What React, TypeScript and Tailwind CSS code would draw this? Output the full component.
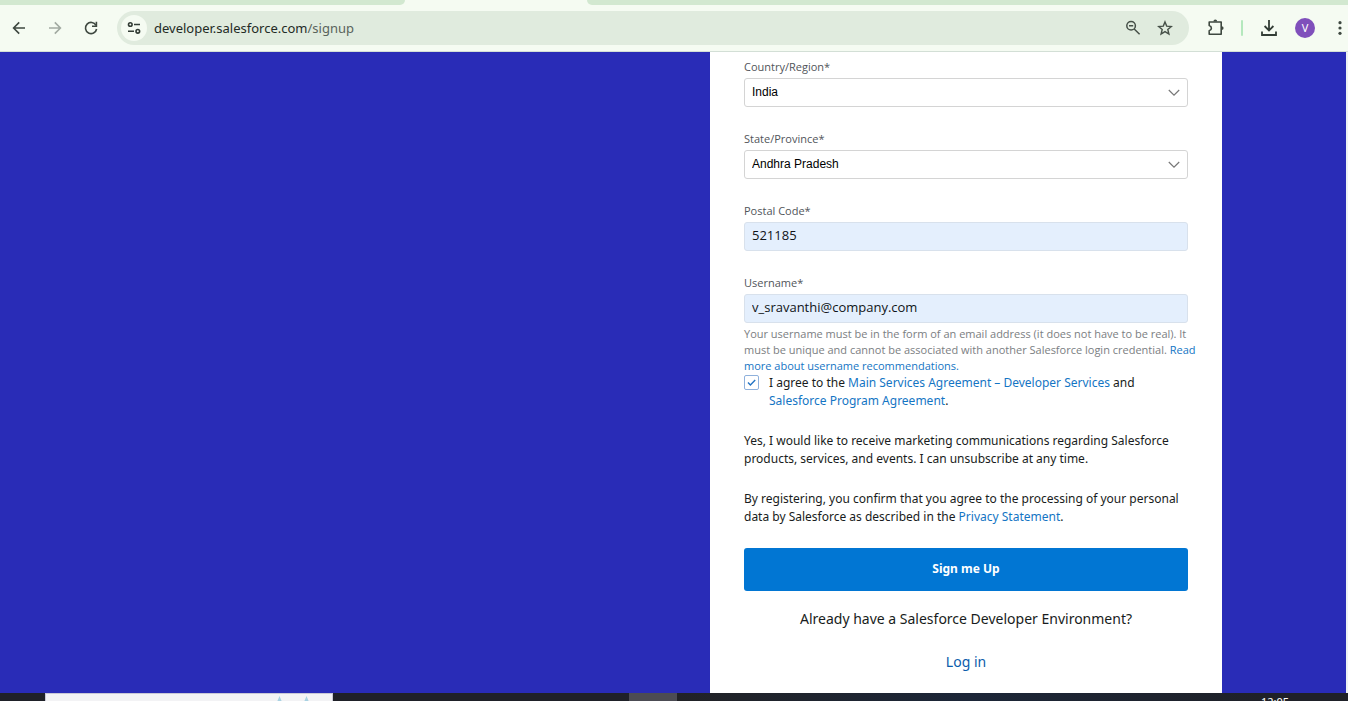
import React, { useState } from "react";

const STATES = ["Andhra Pradesh", "Karnataka", "Kerala", "Tamil Nadu", "Telangana"];
const COUNTRIES = ["India", "Japan", "United Kingdom", "United States"];

const link = "text-[#1475c4] hover:underline";

function Toolbar() {
  return (
    <header className="shrink-0 border-b border-[#d3dfd6] bg-[#f5fbf2]">
      <div className="flex h-[5px]">
        <div className="w-[405px] rounded-br-lg bg-[#d2e8d0]" />
        <div className="w-[182px]" />
        <div className="flex-1 rounded-bl-lg bg-[#d2e8d0]" />
      </div>
      <div className="flex h-[46px] items-center">
        <button aria-label="Back" className="ml-[11px] size-4">
          <svg viewBox="0 0 16 16" fill="none" stroke="#3e4840" strokeWidth="1.6">
            <path d="M14 8H2.8M8.2 2.4 2.6 8l5.6 5.6" />
          </svg>
        </button>
        <button aria-label="Forward" className="ml-5 size-4">
          <svg viewBox="0 0 16 16" fill="none" stroke="#a2aaa2" strokeWidth="1.6">
            <path d="M2 8h11.2M7.8 2.4 13.4 8l-5.6 5.6" />
          </svg>
        </button>
        <button aria-label="Reload" className="ml-5 size-4">
          <svg viewBox="0 0 16 16" fill="none" stroke="#3e4840" strokeWidth="1.6">
            <path d="M13 5.3A5.6 5.6 0 1 0 13.6 9" />
            <path d="M13.4 1.8v4.4H9" />
          </svg>
        </button>
        <div className="ml-[18px] flex h-[34px] flex-1 items-center rounded-full bg-[#e0ebde] pr-4">
          <button
            aria-label="View site information"
            className="ml-1 flex size-[26px] items-center justify-center rounded-full bg-[#f5fbf2]"
          >
            <svg className="size-4" viewBox="0 0 16 16" fill="none" stroke="#333d36" strokeWidth="1.6">
              <circle cx="4.3" cy="4.5" r="1.8" />
              <path d="M8 4.5h6M2 11.3h6" />
              <circle cx="11.8" cy="11.3" r="1.8" />
            </svg>
          </button>
          <div className="ml-[7px] flex-1 font-['Noto_Sans',sans-serif] text-[13px] leading-5 text-[#232a25]">
            developer.salesforce.com<span className="text-[#59635b]">/signup</span>
          </div>
          <button aria-label="Zoom" className="size-4">
            <svg viewBox="0 0 16 16" fill="none" stroke="#465048" strokeWidth="1.5">
              <circle cx="6.1" cy="5.8" r="4.3" />
              <path d="M4 5.8h4.2M9.2 9l5.4 5.2" />
            </svg>
          </button>
          <button aria-label="Bookmark this tab" className="ml-4 size-4">
            <svg viewBox="0 0 16 16" fill="none" stroke="#465048" strokeWidth="1.4">
              <path d="m8 1.9 1.7 4.2 4.6.4-3.5 3 1.1 4.5L8 11.6 4.1 14l1.1-4.5-3.5-3 4.6-.4z" />
            </svg>
          </button>
        </div>
        <button aria-label="Extensions" className="ml-[18px] size-[18px]">
          <svg viewBox="0 0 18 18" fill="none" stroke="#3e4840" strokeWidth="1.6">
            <path d="M2.2 3h12v12.300h-12v-3.600c1.500-.4 2.200-1.300 2.200-2.500s-.7-2.200-2.200-2.600z" strokeLinejoin="round" />
            <path d="M6.400 2.500a1.900 1.900 0 0 1 3.800 0zM14.700 7.200a1.900 1.900 0 0 1 0 3.800z" fill="#3e4840" stroke="none" />
          </svg>
        </button>
        <div className="ml-4 h-4 w-0.5 rounded-full bg-[#b4e8bd]" />
        <button aria-label="Downloads" className="ml-[17px] size-[18px]">
          <svg viewBox="0 0 18 18" fill="none" stroke="#333d36" strokeWidth="1.8">
            <path d="M9 1v10.200M4.600 7 9 11.400 13.400 7M2 12.500v3.500h14v-3.500" />
          </svg>
        </button>
        <button
          aria-label="Profile"
          className="ml-[17px] flex size-5 items-center justify-center rounded-full bg-[#7f4fbb] font-['Noto_Sans',sans-serif] text-[11px] text-white"
        >
          V
        </button>
        <button aria-label="Menu" className="ml-[17px] size-4">
          <svg viewBox="0 0 16 16" fill="#3e4840">
            <circle cx="8" cy="2.700" r="1.600" />
            <circle cx="8" cy="8" r="1.600" />
            <circle cx="8" cy="13.300" r="1.600" />
          </svg>
        </button>
      </div>
    </header>
  );
}

function Label({ id, children }: { id: string; children: React.ReactNode }) {
  return (
    <label htmlFor={id} className="mb-[3px] block font-['Open_Sans',sans-serif] text-[11px] leading-4 text-[#51555a]">
      {children}
    </label>
  );
}

function SelectField({ id, label, options }: { id: string; label: string; options: string[] }) {
  return (
    <div className="mb-6">
      <Label id={id}>{label}</Label>
      <div className="grid items-center">
        <select
          id={id}
          defaultValue={options[0]}
          className="col-start-1 row-start-1 h-[29px] w-full appearance-none rounded-[3px] border border-[#d4d4d4] bg-white px-[7px] pb-0.5 font-['Liberation_Sans',sans-serif] text-xs text-black"
        >
          {options.map((o) => (
            <option key={o}>{o}</option>
          ))}
        </select>
        <svg
          className="pointer-events-none col-start-1 row-start-1 mr-2 h-2 w-3 justify-self-end"
          viewBox="0 0 12 8"
          fill="none"
          stroke="#777"
          strokeWidth="1.2"
        >
          <path d="M.8 1 6 6.200 11.200 1" />
        </svg>
      </div>
    </div>
  );
}

function TextField({ id, label, value }: { id: string; label: string; value: string }) {
  return (
    <div>
      <Label id={id}>{label}</Label>
      <input
        id={id}
        defaultValue={value}
        className="block h-[29px] w-full rounded-[3px] border border-[#d8e1ec] bg-[#e4effd] px-[7px] pb-1 font-['Open_Sans',sans-serif] text-[13px] text-[#101418]"
      />
    </div>
  );
}

function SignupForm() {
  const [agreed, setAgreed] = useState(true);
  return (
    <form
      className="w-[512px] bg-white px-[34px] pt-[7px] pb-5 font-['Noto_Sans',sans-serif] text-xs leading-[18px] text-[#181c20]"
      onSubmit={(e) => e.preventDefault()}
    >
      <SelectField id="country" label="Country/Region*" options={COUNTRIES} />
      <SelectField id="state" label="State/Province*" options={STATES} />
      <div className="mb-6">
        <TextField id="postal" label="Postal Code*" value="521185" />
      </div>
      <TextField id="username" label="Username*" value="v_sravanthi@company.com" />
      <p className="mt-[3px] font-['Open_Sans',sans-serif] text-[11px] leading-4 whitespace-nowrap text-[#7b7e82]">
        Your username must be in the form of an email address (it does not have to be real). It
        <br />
        must be unique and cannot be associated with another Salesforce login credential.{" "}
        <a href="#recommendations" className={link}>
          Read
          <br />
          more about username recommendations.
        </a>
      </p>
      <div className="flex">
        <div className="mt-px grid size-[15px] shrink-0 place-items-center">
          <input
            id="agree"
            type="checkbox"
            checked={agreed}
            onChange={() => setAgreed(!agreed)}
            className="col-start-1 row-start-1 size-[15px] appearance-none rounded-[2px] border border-[#8fb1dc] bg-white"
          />
          {agreed && (
            <svg
              className="pointer-events-none col-start-1 row-start-1 size-[9px]"
              viewBox="0 0 9 9"
              fill="none"
              stroke="#2474c4"
              strokeWidth="1.400"
            >
              <path d="m1 4.500 2.400 2.400L8.200 2" />
            </svg>
          )}
        </div>
        <label htmlFor="agree" className="ml-2.5">
          I agree to the{" "}
          <a href="#msa" className={link}>
            Main Services Agreement – Developer Services
          </a>{" "}
          and
          <br />
          <a href="#program" className={link}>
            Salesforce Program Agreement
          </a>
          .
        </label>
      </div>
      <p className="mt-[22px]">
        Yes, I would like to receive marketing communications regarding Salesforce
        <br />
        products, services, and events. I can unsubscribe at any time.
      </p>
      <p className="mt-[22px]">
        By registering, you confirm that you agree to the processing of your personal
        <br />
        data by Salesforce as described in the{" "}
        <a href="#privacy" className={link}>
          Privacy Statement
        </a>
        .
      </p>
      <button
        type="submit"
        className="mt-[22px] block h-[43px] w-full rounded-[3px] bg-[#0176d3] pb-0.5 text-xs font-bold text-white"
      >
        Sign me Up
      </button>
      <p className="mt-[18px] text-center text-sm leading-5">Already have a Salesforce Developer Environment?</p>
      <p className="mt-[23px] text-center text-sm leading-5">
        <a href="#login" className="text-[#0b5cab] hover:underline">
          Log in
        </a>
      </p>
    </form>
  );
}

function Taskbar() {
  return (
    <footer className="flex h-2 shrink-0 overflow-hidden bg-[#1f2128]">
      <div className="ml-[45px] flex w-72 justify-end border border-b-0 border-[#c9c9d6] bg-[#f3f3f5] pr-[18px]">
        <svg className="h-2 w-10" viewBox="0 0 40 8" fill="#a9d2e2">
          <path d="M3 8 5.500 2 8 8zM30 8l2.500-6L35 8z" />
        </svg>
      </div>
      <div className="ml-[296px] w-12 bg-[#4c4c53]" />
      <div className="flex-1 bg-linear-to-r from-[#212226] via-[#1c2638] to-[#1f2128]" />
      <time className="w-[87px] pt-[3px] font-['Noto_Sans',sans-serif] text-[11px] leading-3 text-white">12:05</time>
    </footer>
  );
}

export default function App() {
  return (
    <div className="flex h-screen flex-col overflow-hidden">
      <Toolbar />
      <main className="flex min-h-0 flex-1 justify-end overflow-hidden border-r-2 border-[#eef3f4] bg-[#292cb7] pr-[124px]">
        <SignupForm />
      </main>
      <Taskbar />
    </div>
  );
}
